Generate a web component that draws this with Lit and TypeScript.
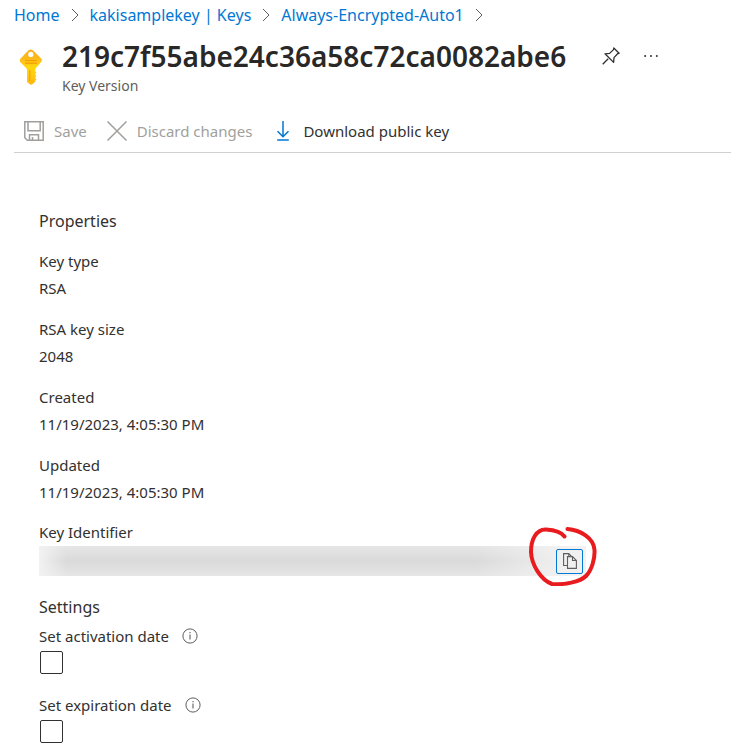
import { LitElement, html, svg, css } from "lit";
import { customElement, state } from "lit/decorators.js";

const chevron = html`<svg class="chevron" width="8" height="14" viewBox="0 0 8 14" aria-hidden="true">
  <path d="M1 1l6 6-6 6" fill="none" stroke="#605e5c" stroke-width="1" />
</svg>`;

const keyIcon = html`<svg class="key" width="24" height="36" viewBox="0 0 24 36" aria-hidden="true">
  <defs>
    <linearGradient id="gold" x1="0" y1="0" x2="0" y2="1">
      <stop offset="0" stop-color="#feae1b" />
      <stop offset="0.25" stop-color="#fdb91a" />
      <stop offset="0.5" stop-color="#ffd70f" />
      <stop offset="0.75" stop-color="#ffcb12" />
      <stop offset="1" stop-color="#feb411" />
    </linearGradient>
  </defs>
  <path
    fill="url(#gold)"
    fill-rule="evenodd"
    d="M9.500 1.200q2.200-1.500 4.400 0l8.300 8.300q1.300 1.600 0 3.400l-5.200 6.200q-.7.8-.7 1.700v1.400l1.200 1.200-1.200 1.400v1l1.200 1.200-1.200 1.200v1l1.200 1.200-1.200 1.200v1.100l-3 2.600q-1.200.9-2.400 0l-2.900-2.500v-11.800q0-1-.7-1.700l-5.900-6.100q-1.300-1.800 0-3.500zM11.800 2.800a2.600 2.600 0 1 0 0 5.200a2.600 2.600 0 1 0 0-5.200z"
  />
  <path d="M6.500 11.500h11M6.500 14.200h11" stroke="#f59b00" stroke-width="1.200" stroke-linecap="round" />
  <path d="M10.800 21v11" stroke="#f9a30d" stroke-width="1.300" />
</svg>`;

const saveIcon = html`<svg width="20" height="20" viewBox="0 0 20 20" fill="none" stroke="currentColor" stroke-width="1.500" aria-hidden="true">
  <path d="M.8.8h18.400v18.400H3.300L.8 16.700zM4 .8v9h12.200v-9M5.500 19v-5.200h9V19M8.500 19v-3" />
</svg>`;

const discardIcon = html`<svg width="20" height="20" viewBox="0 0 20 20" fill="none" stroke="currentColor" stroke-width="1.500" aria-hidden="true">
  <path d="M.5.5l19 19M19.500.5l-19 19" />
</svg>`;

const downloadIcon = html`<svg class="blue" width="14" height="20" viewBox="0 0 14 20" fill="none" stroke="currentColor" stroke-width="1.500" aria-hidden="true">
  <path d="M7 0v15.500M1.500 10.200L7 15.700l5.500-5.500M1.200 19h11.600" />
</svg>`;

const pinIcon = html`<svg width="18" height="18" viewBox="0 0 18 18" fill="none" stroke="currentColor" stroke-width="1.300" stroke-linejoin="round" aria-hidden="true">
  <path d="M.7 17.300L6.200 11.800M11.800 1l5.300 5.300-1.500.4-3.600 3.900-.4 4.800-8.600-8.600 4.600-.4 3.900-3.800z" />
</svg>`;

const moreIcon = html`<svg width="14" height="4" viewBox="0 0 14 4" fill="currentColor" aria-hidden="true">
  <circle cx="1.200" cy="2" r="1" /><circle cx="7" cy="2" r="1" /><circle cx="12.800" cy="2" r="1" />
</svg>`;

const infoIcon = html`<svg width="16" height="16" viewBox="0 0 16 16" fill="none" stroke="currentColor" aria-hidden="true">
  <circle cx="8" cy="8" r="7.100" stroke-width="1" />
  <path d="M8 6.500v5M8 4v1.300" stroke-width="1.100" />
</svg>`;

const copyIcon = html`<svg width="14" height="16" viewBox="0 0 14 16" fill="none" stroke="currentColor" stroke-width="1.100" aria-hidden="true">
  <path d="M4 12.500H.6V.6h5.200l2.700 2.700M5.800.6v2.600" />
  <path d="M4.500 3.600h5l3.900 3.900v7.900H4.500zM9.500 3.600v3.900h3.900" fill="#f0f0f0" />
</svg>`;

const details = [
  ["Key type", "RSA"],
  ["RSA key size", "2048"],
  ["Created", "11/19/2023, 4:05:30 PM"],
  ["Updated", "11/19/2023, 4:05:30 PM"],
];

@customElement("app-root")
export class AppRoot extends LitElement {
  @state() private activation = false;
  @state() private expiration = false;

  static styles = css`
    :host {
      display: block;
      background: #fff;
      color: #323130;
      font: 15px/20px "Noto Sans", "Open Sans", sans-serif;
    }
    * { box-sizing: border-box; }
    svg { display: block; flex: none; }
    h1, h2, p, dl, dd { margin: 0; font-weight: 400; }
    button {
      display: flex;
      align-items: center;
      padding: 0;
      border: 0;
      background: none;
      color: inherit;
      font: inherit;
    }
    .page { padding: 5px 0 12px 14px; }
    .crumbs { display: flex; align-items: center; gap: 11px; font-size: 16px; white-space: nowrap; }
    .crumbs a { color: #0078d4; text-decoration: none; }
    .head { display: flex; gap: 19px; padding: 11px 0 0 5px; }
    .key { margin-top: 13px; }
    .title { display: flex; align-items: center; height: 40px; }
    .title h1 { font-size: 28px; line-height: 40px; font-weight: 600; color: #292827; }
    .title button { margin-left: 36px; }
    .title .more { margin-left: 24px; }
    .subtitle { font-size: 14px; color: #605e5c; }
    .bar {
      display: flex;
      align-items: center;
      gap: 20px;
      margin-top: 14px;
      padding-left: 10px;
      height: 43px;
      border-bottom: 1px solid #d2d0ce;
      white-space: nowrap;
    }
    .bar button { gap: 10px; }
    .bar button:disabled { color: #a19f9d; }
    .blue { color: #0078d4; margin: 0 3px 0 4px; }
    .content { padding: 58px 25px 0; }
    h2 { font-size: 16px; line-height: 20px; }
    dl { padding-top: 20px; }
    dd { padding: 7px 0 21px; }
    dd:last-of-type { padding-bottom: 20px; }
    .identifier { display: block; }
    .field {
      position: relative;
      display: flex;
      align-items: center;
      max-width: 547px;
      height: 30px;
      margin: 4px 0 21px;
      padding-right: 3px;
      background:
        linear-gradient(90deg, #f2f2f2, #dadada00 5%, #dadada00 80%, #f2f2f2 97%),
        linear-gradient(#e6e6e6, #dadada 50%, #e6e6e6);
    }
    .field input {
      flex: 1;
      min-width: 0;
      border: 0;
      background: none;
      outline: none;
    }
    .copy {
      justify-content: center;
      width: 27px;
      height: 25px;
      border: 1px solid #0078d4;
      border-radius: 2px;
      background: #f0f0f0;
      color: #605e5c;
    }
    .mark { position: absolute; right: -12px; top: -20px; pointer-events: none; }
    .setting { padding-bottom: 21px; }
    .setting:first-of-type { padding-top: 9px; }
    .row { display: flex; align-items: center; gap: 13px; }
    .row button { color: #605e5c; }
    .check {
      appearance: none;
      display: block;
      width: 23px;
      height: 23px;
      margin: 5px 0 0 1px;
      border: 1px solid #323130;
      border-radius: 2px;
      background: #fff;
    }
    .check:checked { background: #0078d4; }
  `;

  private setting(id: string, label: string, checked: boolean, onChange: (v: boolean) => void) {
    return html`<div class="setting">
      <div class="row">
        <label for=${id}>${label}</label>
        <button aria-label="About: ${label}">${infoIcon}</button>
      </div>
      <input
        class="check"
        type="checkbox"
        id=${id}
        .checked=${checked}
        @change=${(e: Event) => onChange((e.target as HTMLInputElement).checked)}
      />
    </div>`;
  }

  render() {
    return html`<main class="page">
      <nav class="crumbs" aria-label="Breadcrumb">
        <a href="#home">Home</a>${chevron}
        <a href="#keys">kakisamplekey | Keys</a>${chevron}
        <a href="#key">Always-Encrypted-Auto1</a>${chevron}
      </nav>
      <header class="head">
        ${keyIcon}
        <div>
          <div class="title">
            <h1>219c7f55abe24c36a58c72ca0082abe6</h1>
            <button aria-label="Pin">${pinIcon}</button>
            <button class="more" aria-label="More">${moreIcon}</button>
          </div>
          <p class="subtitle">Key Version</p>
        </div>
      </header>
      <div class="bar" role="toolbar">
        <button disabled>${saveIcon}Save</button>
        <button disabled>${discardIcon}Discard changes</button>
        <button>${downloadIcon}Download public key</button>
      </div>
      <div class="content">
        <section>
          <h2>Properties</h2>
          <dl>${details.map(([name, value]) => html`<dt>${name}</dt><dd>${value}</dd>`)}</dl>
          <label class="identifier" for="identifier">Key Identifier</label>
          <div class="field">
            <input id="identifier" type="text" readonly />
            <button class="copy" aria-label="Copy">${copyIcon}</button>
            <svg class="mark" width="70" height="60" viewBox="0 0 70 60" aria-hidden="true">
              ${svg`<path d="M36.500 10.500C33 5.500 26 4 18 3.500C8 3 3 14 3 26C3.500 39 13 54 24 58C36 59 52 56 58 50C64 44 67 32 66.500 24C66 12 52 4 39.500 3"
                fill="none" stroke="#e81c1f" stroke-width="4" stroke-linecap="round" stroke-linejoin="round" />`}
            </svg>
          </div>
        </section>
        <section>
          <h2>Settings</h2>
          ${this.setting("activation", "Set activation date", this.activation, (v) => (this.activation = v))}
          ${this.setting("expiration", "Set expiration date", this.expiration, (v) => (this.expiration = v))}
        </section>
      </div>
    </main>`;
  }
}
